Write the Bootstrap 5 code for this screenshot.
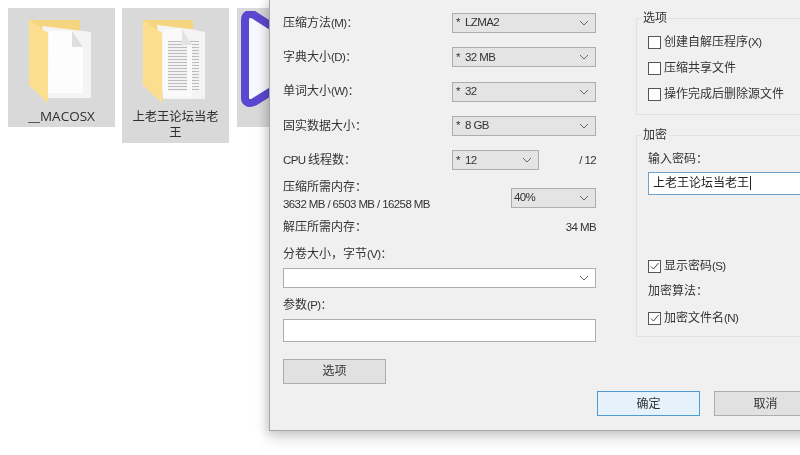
<!DOCTYPE html>
<html lang="zh">
<head>
<meta charset="utf-8">
<title>压缩</title>
<link href="https://cdn.jsdelivr.net/npm/bootstrap@5.3.0/dist/css/bootstrap.min.css" rel="stylesheet">
<style>
html,body{height:100%;overflow:hidden;background:#fff}
body{font-family:"Liberation Sans","Noto Sans CJK SC",sans-serif;font-size:11.5px;letter-spacing:-.6px;color:#333;filter:blur(.35px)}
.cjk{font-size:12px;letter-spacing:0}
.desk{padding:8px;gap:7px;align-items:flex-start}
.fitem{width:107px;background:#d9d9d9;text-align:center;font-size:13.5px;line-height:16px;color:#2f2f2f;padding:3px 8px;flex:none;letter-spacing:0}
.fitem svg{display:block;margin:0 auto}
.fitem.third{margin-left:1px}
.fitem svg.tri{margin-left:-4px}
.fname{margin-top:-1px;font-family:"Open Sans","Noto Sans CJK SC",sans-serif}
.fname.zh{font-size:12.3px;margin-top:0}
.one{height:119px}
.two{height:135px}
.wnd{position:absolute;left:269px;top:-2px;width:620px;height:433px;background:#f0f0f0;border:1px solid #a6a6a6;box-shadow:0 6px 14px rgba(0,0,0,.18),-3px 2px 8px rgba(0,0,0,.10);padding:14px 13px 0}
.lcol{width:313px;flex:none}
.rcol{width:230px;flex:none;margin-left:40px}
.frow{height:20px;margin-bottom:14.3px}
.lbl{width:169px;flex:none;white-space:nowrap}
.sel{height:20px;background:#e4e4e4;border:1px solid #adadad;padding:0 6px 0 3px;color:#333}
.sel svg{flex:none}
.sel.w1{width:144px}
.sel.w2{width:87px}
.sel.w3{width:85px;padding-left:2px;margin-top:7.5px}
.sel.blank{background:#fff;width:100%;margin-top:6px}
.memrow{margin-top:-4px;height:36px}
.memtop{line-height:14px}
.memsub{margin-top:3px;white-space:nowrap;line-height:14px}
.mem2{margin-top:1.5px;line-height:18px}
.cap1{margin-top:10px;line-height:16px}
.cap2{margin-top:9px;line-height:16px}
.field{border:1px solid #e2e2e2;position:relative;padding:0 11px}
.lgd{position:absolute;left:5px;top:-9px;background:#f0f0f0;padding:0 1px;line-height:16px}
.fs1{height:97px;margin-top:5px;padding-top:10px}
.fs2{height:202px;margin-top:20px;padding-top:14px}
.pwcap{line-height:18px}
.chk{height:26px;white-space:nowrap}
.box{width:13px;height:13px;border:1px solid #555;background:#fff;margin-right:3px;flex:none;display:flex}
.pw{height:23px;width:100%;background:#fff;border:1px solid #6da2cf;padding:0 4px;margin-top:4px;font-size:12px;letter-spacing:0;color:#222;line-height:21px}
.caret{border-right:1px solid #222;padding-right:1px}
.plain{height:23px;background:#fff;border:1px solid #adadad;margin-top:6px}
.wbtn{height:25px;width:103px;background:#e1e1e1;border:1px solid #adadad;border-radius:0;padding:0;font-size:12px;letter-spacing:0;color:#333;line-height:1;--bs-btn-hover-bg:#e1e1e1}
.wbtn.pri{background:#e5f1fb;border-color:#4f9bd3}
.btnbar{position:absolute;left:327px;top:392px;gap:14px}
.opt{margin-top:17px;display:block}
.showpw{margin-top:58px}
.algo{margin-top:2.5px;line-height:18px}
.encn{margin-top:6px}
</style>
</head>
<body>
<div class="d-flex desk">
  <div class="fitem one">
    <svg width="91" height="98" viewBox="0 0 91 98">
      <path d="M13 9h51v60H13z" fill="#f5d57f"/>
      <path d="M26 15 59 19 75 21 75 87 32 87z" fill="#f4f4f4"/>
      <path d="M33 20H56L67 36V82H32z" fill="#fdfdfd"/>
      <path d="M56 20V36H67z" fill="#dedede"/>
      <path d="M13 9 32 22V92L13 74z" fill="#fbdf8f"/>
    </svg>
    <div class="fname">__MACOSX</div>
  </div>
  <div class="fitem two">
    <svg width="91" height="98" viewBox="0 0 91 98">
      <defs><pattern id="lines" width="4" height="3" patternUnits="userSpaceOnUse"><rect width="4" height="3" fill="#f2f2f2"/><rect width="4" height="1" fill="#bdbdbd"/></pattern></defs>
      <path d="M13 9h50v60H13z" fill="#f5d57f"/>
      <path d="M27 14 60 18 75 21 75 88 33 88z" fill="#f4f4f4"/>
      <path d="M60 28H69V80H60z" fill="url(#lines)"/>
      <path d="M33 18H52L62 34V86H33z" fill="#fafafa"/>
      <path d="M38 30H57V80H38z" fill="url(#lines)"/>
      <path d="M52 18V34H62z" fill="#e3e3e3"/>
      <path d="M13 9 32 22V92L13 74z" fill="#fbdf8f"/>
    </svg>
    <div class="fname zh">上老王论坛当老王</div>
  </div>
  <div class="fitem one third">
    <svg class="tri" width="91" height="98" viewBox="0 0 91 98">
      <path d="M4 9C4 3 9 2 13 4L82 48 13 91C9 93 4 92 4 87Z" fill="#f8f8ff" stroke="#5c48d0" stroke-width="8" stroke-linejoin="round"/>
    </svg>
  </div>
</div>

<div class="wnd">
  <div class="d-flex">
    <div class="lcol">
      <div class="d-flex align-items-center frow"><span class="lbl"><span class="cjk">压缩方法</span>(M)：</span>
        <div class="sel w1 d-flex align-items-center justify-content-between ms-auto"><span>* &nbsp;LZMA2</span><svg width="10" height="6" viewBox="0 0 10 6"><path d="M1 1l4 4 4-4" fill="none" stroke="#666"/></svg></div></div>
      <div class="d-flex align-items-center frow"><span class="lbl"><span class="cjk">字典大小</span>(D)：</span>
        <div class="sel w1 d-flex align-items-center justify-content-between ms-auto"><span>* &nbsp;32 MB</span><svg width="10" height="6" viewBox="0 0 10 6"><path d="M1 1l4 4 4-4" fill="none" stroke="#666"/></svg></div></div>
      <div class="d-flex align-items-center frow"><span class="lbl"><span class="cjk">单词大小</span>(W)：</span>
        <div class="sel w1 d-flex align-items-center justify-content-between ms-auto"><span>* &nbsp;32</span><svg width="10" height="6" viewBox="0 0 10 6"><path d="M1 1l4 4 4-4" fill="none" stroke="#666"/></svg></div></div>
      <div class="d-flex align-items-center frow"><span class="lbl cjk">固实数据大小：</span>
        <div class="sel w1 d-flex align-items-center justify-content-between ms-auto"><span>* &nbsp;8 GB</span><svg width="10" height="6" viewBox="0 0 10 6"><path d="M1 1l4 4 4-4" fill="none" stroke="#666"/></svg></div></div>
      <div class="d-flex align-items-center frow"><span class="lbl">CPU <span class="cjk">线程数：</span></span>
        <div class="sel w2 d-flex align-items-center justify-content-between"><span>* &nbsp;12</span><svg width="10" height="6" viewBox="0 0 10 6"><path d="M1 1l4 4 4-4" fill="none" stroke="#666"/></svg></div>
        <span class="ms-auto">/ 12</span></div>
      <div class="d-flex align-items-start memrow">
        <div><div class="cjk memtop">压缩所需内存：</div><div class="memsub">3632 MB / 6503 MB / 16258 MB</div></div>
        <div class="sel w3 d-flex align-items-center justify-content-between ms-auto"><span>40%</span><svg width="10" height="6" viewBox="0 0 10 6"><path d="M1 1l4 4 4-4" fill="none" stroke="#666"/></svg></div>
      </div>
      <div class="d-flex align-items-center justify-content-between mem2"><span class="cjk">解压所需内存：</span><span>34 MB</span></div>
      <div class="cap1"><span class="cjk">分卷大小，字节</span>(V)：</div>
      <div class="sel blank d-flex align-items-center justify-content-end"><svg width="10" height="6" viewBox="0 0 10 6"><path d="M1 1l4 4 4-4" fill="none" stroke="#666"/></svg></div>
      <div class="cap2"><span class="cjk">参数</span>(P)：</div>
      <div class="plain"></div>
      <button type="button" class="btn wbtn opt">选项</button>
    </div>
    <div class="rcol">
      <div class="field fs1">
        <span class="lgd cjk">选项</span>
        <div class="d-flex align-items-center chk"><span class="box"></span><span><span class="cjk">创建自解压程序</span>(X)</span></div>
        <div class="d-flex align-items-center chk"><span class="box"></span><span class="cjk">压缩共享文件</span></div>
        <div class="d-flex align-items-center chk"><span class="box"></span><span class="cjk">操作完成后删除源文件</span></div>
      </div>
      <div class="field fs2">
        <span class="lgd cjk">加密</span>
        <div class="cjk pwcap">输入密码：</div>
        <div class="pw"><span class="caret">上老王论坛当老王</span></div>
        <div class="d-flex align-items-center chk showpw"><span class="box"><svg width="11" height="11" viewBox="0 0 11 11"><path d="M2 5.5l2.5 2.5 5-6" fill="none" stroke="#444"/></svg></span><span><span class="cjk">显示密码</span>(S)</span></div>
        <div class="cjk algo">加密算法：</div>
        <div class="d-flex align-items-center chk encn"><span class="box"><svg width="11" height="11" viewBox="0 0 11 11"><path d="M2 5.5l2.5 2.5 5-6" fill="none" stroke="#444"/></svg></span><span><span class="cjk">加密文件名</span>(N)</span></div>
      </div>
    </div>
  </div>
  <div class="d-flex btnbar">
    <button type="button" class="btn wbtn pri">确定</button>
    <button type="button" class="btn wbtn">取消</button>
  </div>
</div>
<script src="https://cdn.jsdelivr.net/npm/bootstrap@5.3.0/dist/js/bootstrap.bundle.min.js"></script>
</body>
</html>
